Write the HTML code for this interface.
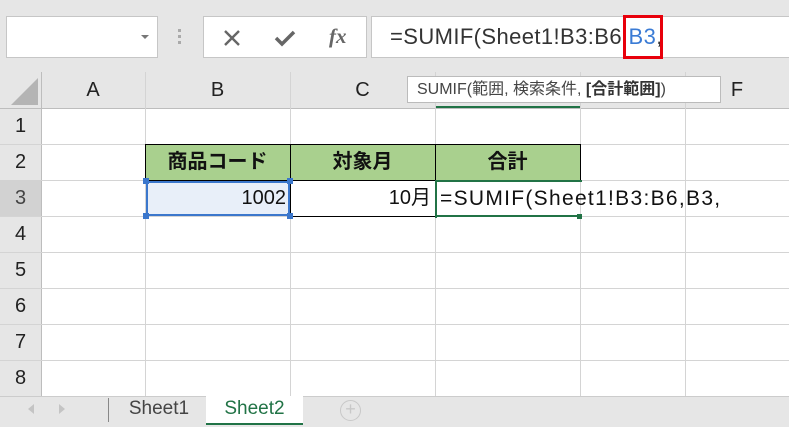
<!DOCTYPE html>
<html><head><meta charset="utf-8"><style>
*{margin:0;padding:0;box-sizing:border-box}
body{width:789px;height:427px;background:#fff;font-family:"Liberation Sans","Noto Sans CJK JP",sans-serif;position:relative;overflow:hidden}
.a{position:absolute}
.tb{left:0;top:0;width:789px;height:72px;background:#e6e6e6}
.box{background:#fff;border:1px solid #c6c6c6}
.hl{background:#e6e6e6}
.vl{position:absolute;width:1px;background:#d4d4d4}
.hz{position:absolute;height:1px;background:#d4d4d4}
.ch{position:absolute;top:72px;height:36px;line-height:36px;text-align:center;font-size:20px;color:#222}
.rh{position:absolute;left:0;width:41px;height:36px;line-height:37px;text-align:center;font-size:20px;color:#222}
.cell{position:absolute;font-size:20px;line-height:36px;color:#111}
</style></head><body>
<div class="a tb"></div>
<div class="a box" style="left:6px;top:16px;width:152px;height:42px"></div>
<div class="a" style="left:141px;top:35px;border-left:4px solid transparent;border-right:4px solid transparent;border-top:4px solid #777"></div>
<div class="a" style="left:178px;top:29px;width:3px;height:3px;background:#aaa;box-shadow:0 6px #aaa,0 12px #aaa"></div>
<div class="a box" style="left:203px;top:16px;width:164px;height:42px"></div>
<svg class="a" style="left:222px;top:28px" width="20" height="20"><path d="M3 3L17 17M17 3L3 17" stroke="#666" stroke-width="2.4"/></svg>
<svg class="a" style="left:274px;top:28px" width="22" height="20"><path d="M2 10L8 16L20 4" stroke="#666" stroke-width="3.5" fill="none"/></svg>
<div class="a" style="left:329px;top:24px;font-family:'Liberation Serif',serif;font-style:italic;font-weight:bold;font-size:21px;color:#666">fx</div>
<div class="a box" style="left:371px;top:16px;width:420px;height:42px"></div>
<div class="a" style="left:390px;top:22px;font-size:22px;color:#333;line-height:30px;letter-spacing:0.4px;white-space:nowrap">=SUMIF(Sheet1!B3:B6 <span style="color:#3a7bd5">B3</span>,</div>
<div class="a" style="left:623px;top:15px;width:40px;height:44px;border:3px solid #e8000b"></div>

<div class="a hl" style="left:0;top:72px;width:789px;height:36px"></div>
<div class="a hl" style="left:0;top:108px;width:41px;height:288px"></div>
<svg class="a" style="left:10px;top:78px" width="30" height="28"><path d="M28 0L28 27L1 27Z" fill="#b4b4b4"/></svg>
<div class="vl" style="left:41px;top:72px;height:324px;background:#bdbdbd"></div>
<div class="hz" style="left:0;top:108px;width:789px;background:#bdbdbd"></div>
<div class="ch" style="left:41px;width:104px">A</div>
<div class="ch" style="left:145px;width:145px">B</div>
<div class="ch" style="left:290px;width:145px">C</div>
<div class="ch" style="left:685px;width:104px">F</div>
<div class="a" style="left:435px;top:106px;width:145px;height:2px;background:#217346"></div>
<div class="vl" style="left:145px;top:72px;height:324px"></div>
<div class="vl" style="left:290px;top:72px;height:324px"></div>
<div class="vl" style="left:435px;top:72px;height:324px"></div>
<div class="vl" style="left:580px;top:72px;height:324px"></div>
<div class="vl" style="left:685px;top:72px;height:324px"></div>
<div class="hz" style="left:0;top:144px;width:789px"></div>
<div class="hz" style="left:0;top:180px;width:789px"></div>
<div class="hz" style="left:0;top:216px;width:789px"></div>
<div class="hz" style="left:0;top:252px;width:789px"></div>
<div class="hz" style="left:0;top:288px;width:789px"></div>
<div class="hz" style="left:0;top:324px;width:789px"></div>
<div class="hz" style="left:0;top:360px;width:789px"></div>
<div class="rh" style="top:108px">1</div>
<div class="rh" style="top:144px">2</div>
<div class="rh" style="top:180px;color:#444;background:#d2d2d2">3</div>
<div class="rh" style="top:216px">4</div>
<div class="rh" style="top:252px">5</div>
<div class="rh" style="top:288px">6</div>
<div class="rh" style="top:324px">7</div>
<div class="rh" style="top:360px">8</div>

<div class="a" style="left:145px;top:144px;width:436px;height:37px;background:#a9d08e;border:1px solid #000"></div>
<div class="vl" style="left:290px;top:144px;height:73px;background:#000"></div>
<div class="vl" style="left:435px;top:144px;height:37px;background:#000"></div>
<div class="a" style="left:290px;top:216px;width:146px;height:1px;background:#000"></div>
<div class="cell" style="left:145px;top:144px;width:145px;text-align:center;font-weight:bold">商品コード</div>
<div class="cell" style="left:290px;top:144px;width:145px;text-align:center;font-weight:bold">対象月</div>
<div class="cell" style="left:435px;top:144px;width:145px;text-align:center;font-weight:bold">合計</div>
<div class="a" style="left:146px;top:181px;width:144px;height:35px;background:#e8eff9;border:2px solid #3b77cc"></div>
<div class="a" style="left:143px;top:178px;width:6px;height:6px;background:#3b77cc"></div>
<div class="a" style="left:287px;top:178px;width:6px;height:6px;background:#3b77cc"></div>
<div class="a" style="left:143px;top:213px;width:6px;height:6px;background:#3b77cc"></div>
<div class="a" style="left:287px;top:213px;width:6px;height:6px;background:#3b77cc"></div>
<div class="cell" style="left:145px;top:180px;width:141px;text-align:right">1002</div>
<div class="cell" style="left:290px;top:180px;width:141px;text-align:right">10月</div>
<div class="a" style="left:435px;top:180px;width:147px;height:38px;border:2px solid #217346;border-right:none;border-bottom:none"></div>
<div class="a" style="left:435px;top:215px;width:142px;height:2px;background:#217346"></div>
<div class="a" style="left:577px;top:214px;width:5px;height:5px;background:#217346"></div>
<div class="cell" style="left:440px;top:181px;white-space:nowrap;font-size:21px;letter-spacing:1.3px">=SUMIF(Sheet1!B3:B6,B3,</div>

<div class="a" style="left:407px;top:76px;width:314px;height:27px;background:#fff;border:1px solid #bbb;font-size:16px;line-height:25px;padding-left:9px;color:#444;white-space:nowrap">SUMIF(範囲, 検索条件, <b style="color:#333">[合計範囲]</b>)</div>

<div class="a" style="left:0;top:396px;width:789px;height:31px;background:#e6e6e6;border-top:1px solid #ccc"></div>
<div class="a" style="left:28px;top:404px;border-right:6px solid #c4c4c4;border-top:5px solid transparent;border-bottom:5px solid transparent"></div>
<div class="a" style="left:59px;top:404px;border-left:6px solid #c4c4c4;border-top:5px solid transparent;border-bottom:5px solid transparent"></div>
<div class="a" style="left:108px;top:398px;width:1px;height:24px;background:#888"></div>
<div class="a" style="left:112px;top:396px;width:94px;height:28px;font-size:19px;line-height:26px;text-align:center;color:#444">Sheet1</div>
<div class="a" style="left:206px;top:396px;width:97px;height:29px;background:#fff;border-bottom:2px solid #217346;font-size:19px;line-height:26px;text-align:center;color:#217346">Sheet2</div>
<div class="a" style="left:340px;top:400px;width:21px;height:21px;border:1.5px solid #c8c8c8;border-radius:50%;color:#c8c8c8;font-size:18px;line-height:17px;text-align:center">+</div>
</body></html>
